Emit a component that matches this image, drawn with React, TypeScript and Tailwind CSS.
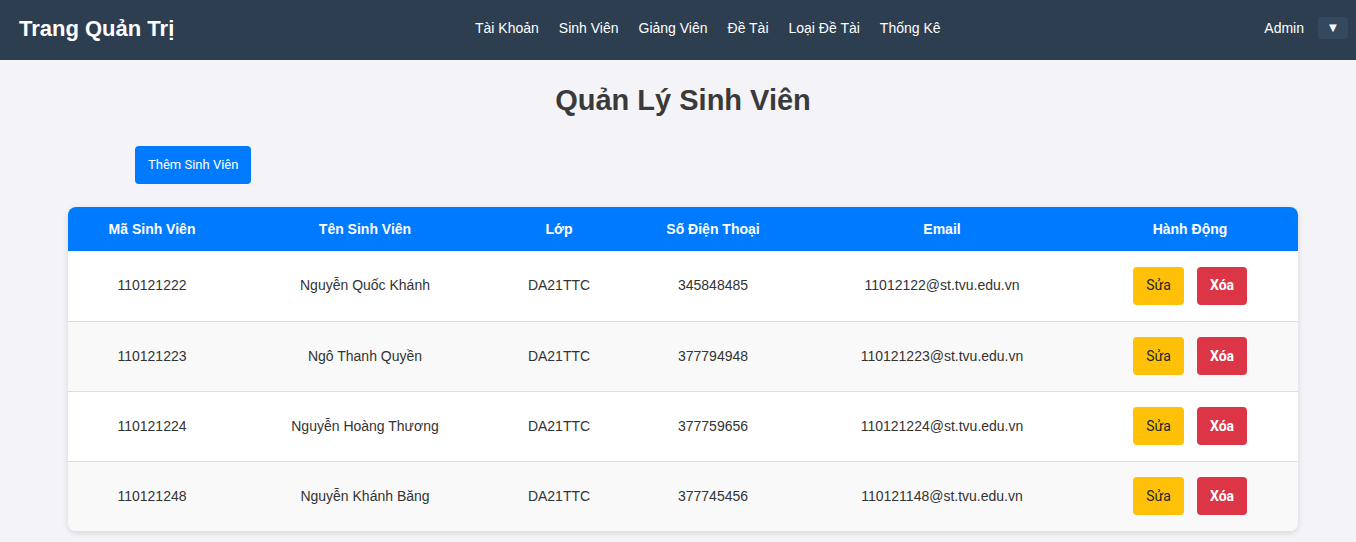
import React from 'react';

const students = [
  { id: '110121222', name: 'Nguyễn Quốc Khánh', lop: 'DA21TTC', phone: '345848485', email: '11012122@st.tvu.edu.vn' },
  { id: '110121223', name: 'Ngô Thanh Quyền', lop: 'DA21TTC', phone: '377794948', email: '110121223@st.tvu.edu.vn' },
  { id: '110121224', name: 'Nguyễn Hoàng Thương', lop: 'DA21TTC', phone: '377759656', email: '110121224@st.tvu.edu.vn' },
  { id: '110121248', name: 'Nguyễn Khánh Băng', lop: 'DA21TTC', phone: '377745456', email: '110121148@st.tvu.edu.vn' },
];

const navLinks = ['Tài Khoản', 'Sinh Viên', 'Giảng Viên', 'Đề Tài', 'Loại Đề Tài', 'Thống Kê'];

export default function App() {
  return (
    <div className="min-h-[542px] bg-[#f4f4f8] font-['Liberation_Sans',Arial,sans-serif] text-[#333]">
      <nav className="h-[60px] bg-[#2c3e50] flex items-center pl-[19px] pr-[8px] pb-[4px]">
        <span className="text-white text-[22px] font-bold w-[456px]">Trang Quản Trị</span>
        <div className="flex items-center gap-[20px] text-white text-[14px]">
          {navLinks.map((l) => (
            <a key={l} className="cursor-pointer">{l}</a>
          ))}
        </div>
        <div className="ml-auto flex items-center gap-[14px]">
          <span className="text-white text-[14px]">Admin</span>
          <button className="w-[30px] h-[22px] rounded-[4px] bg-[#34495e] text-white text-[13px] flex items-center justify-center">▼</button>
        </div>
      </nav>

      <main className="pl-[68px] pr-[58px] pb-[12px]">
        <h2 className="text-center text-[29px] font-bold text-[#3a3a3a] pt-[24px] leading-[32px]">
          Quản Lý Sinh Viên
        </h2>
        <div className="mt-[30px] ml-[67px]">
          <button className="h-[38px] px-[13px] bg-[#007bff] text-white rounded-[4px] font-['Liberation_Sans_Narrow',Roboto,sans-serif] text-[13px]">
            Thêm Sinh Viên
          </button>
        </div>

        <div className="mt-[23px] bg-white rounded-[8px] overflow-hidden shadow-[0_2px_6px_rgba(0,0,0,0.12)]">
          <table className="w-full border-collapse text-[14px] table-fixed">
            <colgroup>
              <col className="w-[168px]" />
              <col className="w-[258px]" />
              <col className="w-[130px]" />
              <col className="w-[178px]" />
              <col className="w-[280px]" />
              <col className="w-[216px]" />
            </colgroup>
            <thead>
              <tr className="bg-[#007bff] text-white h-[44px]">
                {['Mã Sinh Viên', 'Tên Sinh Viên', 'Lớp', 'Số Điện Thoại', 'Email', 'Hành Động'].map((h) => (
                  <th key={h} className="font-bold text-center">{h}</th>
                ))}
              </tr>
            </thead>
            <tbody>
              {students.map((s, i) => (
                <tr
                  key={s.id}
                  className={`h-[70px] text-center ${i % 2 === 1 ? 'bg-[#f9f9f9]' : 'bg-white'} ${i < students.length - 1 ? 'border-b border-[#ddd]' : ''}`}
                >
                  <td>{s.id}</td>
                  <td>{s.name}</td>
                  <td>{s.lop}</td>
                  <td>{s.phone}</td>
                  <td>{s.email}</td>
                  <td>
                    <div className="flex justify-center gap-[13px] font-['Liberation_Sans_Narrow',Roboto,sans-serif] text-[14px]">
                      <button className="w-[51px] h-[38px] rounded-[4px] bg-[#ffc107] text-[#212529]">Sửa</button>
                      <button className="w-[50px] h-[38px] rounded-[4px] bg-[#dc3545] text-white font-bold">Xóa</button>
                    </div>
                  </td>
                </tr>
              ))}
            </tbody>
          </table>
        </div>
      </main>
    </div>
  );
}
